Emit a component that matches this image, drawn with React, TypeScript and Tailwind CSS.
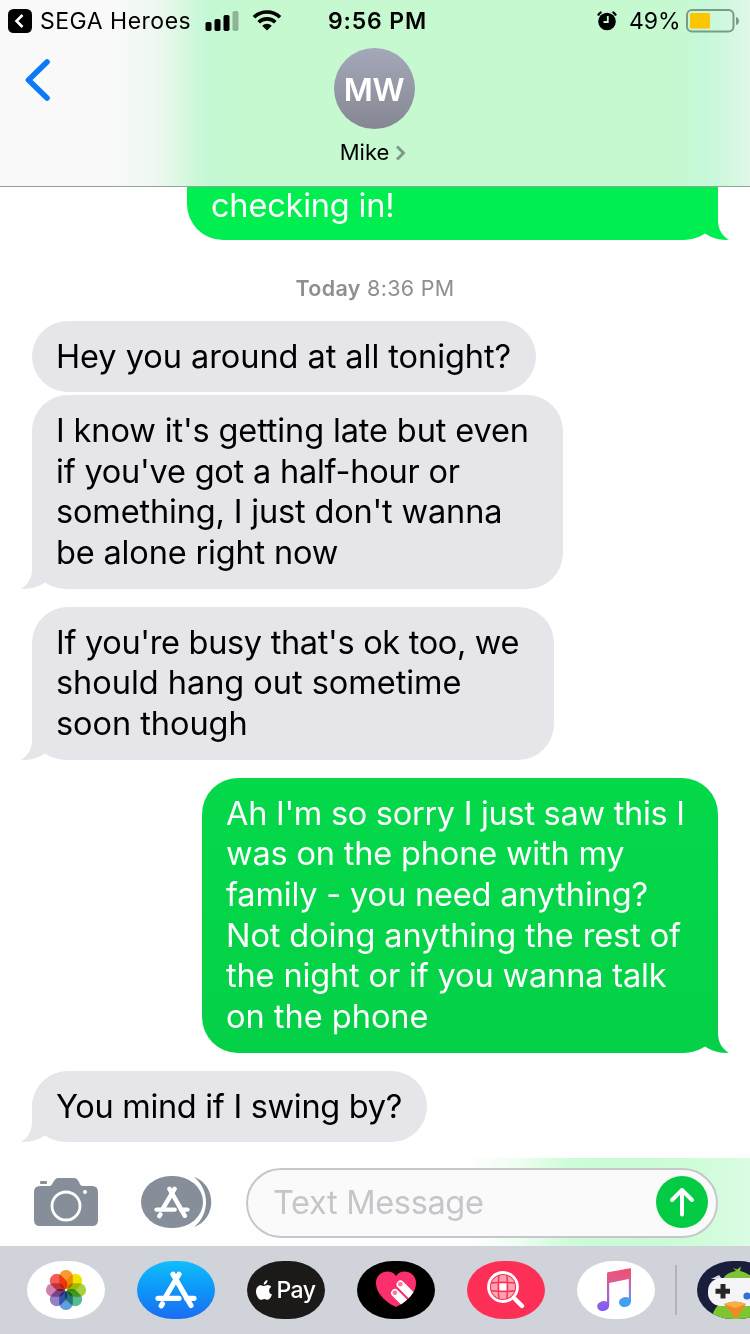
import type { ReactNode } from "react";

type Line = { text: string; tracking?: string };

function Bubble({ side, tone, tailFill = "fill-[#e5e5ea]", width, lines, tail = false, className = "" }: {
  side: "left" | "right";
  tone: string;
  tailFill?: string;
  width: string;
  lines: Line[];
  tail?: boolean;
  className?: string;
}) {
  const left = side === "left";
  return (
    <div className={`relative rounded-[36px] pl-6 pb-[15px] pt-[15.6px] ${width} ${tone} ${left ? "self-start ml-8 text-black" : "self-end mr-8 text-white"} ${className}`}>
      {tail && (
        <svg
          className={`absolute bottom-0 ${left ? "-left-[11px] -scale-x-100" : "-right-[11px]"}`}
          width="51" height="40" viewBox="0 0 51 40"
        >
          <path d="M0 40 C13 40 20 38 27 33.5 C34 38 42 40.5 51 39.8 C44 36 40 29 40 20 V0 H0 Z" className={tailFill} />
        </svg>
      )}
      {lines.map((l) => (
        <div key={l.text} className={`relative whitespace-nowrap text-[32.5px] leading-[40.67px] ${l.tracking ?? ""}`}>{l.text}</div>
      ))}
    </div>
  );
}

function StoreMark({ className }: { className: string }) {
  return (
    <svg className={className} viewBox="0 0 42 38" fill="none" stroke="white" strokeWidth="5.2" strokeLinecap="round">
      <path d="M18 3.2 L36 34.5" />
      <path d="M24 3.2 L10.5 26" />
      <path d="M3 27.3 H24" />
      <path d="M31.5 27.3 H39" />
      <path d="M7.4 32.8 L6.2 34.8" />
    </svg>
  );
}

function Pill({ children, className }: { children: ReactNode; className: string }) {
  return (
    <div className={`flex h-[58px] w-[78px] shrink-0 items-center justify-center overflow-hidden rounded-[36px/29px] ${className}`}>
      {children}
    </div>
  );
}

const petals = [
  ["#f9992e", 0], ["#f3e300", 45], ["#a9d13f", 90], ["#5bbb90", 135],
  ["#5f9fdc", 180], ["#9182c4", 225], ["#cf82b2", 270], ["#f25e55", 315],
] as const;

export default function App() {
  return (
    <div className="flex h-[1334px] w-[750px] flex-col overflow-hidden bg-white font-['Inter','Liberation_Sans',sans-serif]">
      <header className="flex h-[187px] shrink-0 flex-col border-b border-[#8fa598] bg-[linear-gradient(90deg,#f9f9f9_0,#f9f9f9_110px,#eff8f1_155px,#d9f8e1_182px,#c3f8d5_207px,#c6f9cf_250px,#c6f9d0_680px,#c5f8d8_705px,#d6f8e2_735px,#e0f8e8_750px)]">
        <div className="flex h-[41px] shrink-0 items-center text-black">
          <div className="flex w-[328px] items-center pl-2">
            <svg width="24" height="24" viewBox="0 0 24 24">
              <rect width="24" height="24" rx="5.5" fill="#000" />
              <path d="M14.5 6 L8.5 12 L14.5 18" fill="none" stroke="#fff" strokeWidth="2.6" />
            </svg>
            <span className="ml-2 w-[158px] whitespace-nowrap pt-px text-[23px] tracking-[0.5px]">SEGA Heroes</span>
            <svg className="ml-[7px]" width="35" height="20" viewBox="0 0 35 20">
              <rect x="0.5" y="11" width="6" height="9" rx="1.8" />
              <rect x="9.5" y="8" width="6" height="12" rx="1.8" />
              <rect x="18.5" y="4" width="6" height="16" rx="1.8" />
              <rect x="27.5" y="0" width="6" height="20" rx="1.8" fill="#000" opacity=".28" />
            </svg>
            <svg className="ml-3" width="30" height="21" viewBox="0 0 30 21" fill="none" stroke="#000" strokeWidth="3.6">
              <path d="M2 7.2 C9 0.2 21 0.2 28 7.2" />
              <path d="M6.7 12.2 C11 7.8 19 7.8 23.3 12.2" />
              <path d="M10.2 15.8 C13 13 17 13 19.8 15.8 L15 20.6 Z" fill="#000" stroke="none" />
            </svg>
          </div>
          <span className="whitespace-nowrap pt-px text-[23px] font-semibold tracking-[0.85px]">9:56 PM</span>
          <div className="ml-auto flex items-center pr-[10px]">
            <svg width="20" height="20" viewBox="0 0 20 20">
              <circle cx="10" cy="10.5" r="8.8" />
              <path d="M1 4.5 A7 7 0 0 1 4.5 1 M19 4.5 A7 7 0 0 0 15.5 1" fill="none" stroke="#000" strokeWidth="2.2" />
              <path d="M10.8 5 V11 H6.5" fill="none" stroke="#c6f9cf" strokeWidth="1.8" />
            </svg>
            <span className="ml-3 w-[53px] whitespace-nowrap pt-px text-[23px]">49%</span>
            <svg className="ml-1" width="54" height="24" viewBox="0 0 54 24">
              <rect x="1" y="1" width="46.5" height="21.5" rx="5" fill="none" stroke="#7f9987" strokeWidth="2" />
              <rect x="4" y="4" width="20" height="15.5" rx="1.5" fill="#fdc400" />
              <path d="M50 8 C54 9 54 15 50 16 Z" fill="#7f9987" />
            </svg>
          </div>
        </div>
        <div className="grid grid-cols-[1fr_160px_1fr] pr-[2px]">
          <svg className="ml-6 mt-4" width="28" height="46" viewBox="0 0 28 46">
            <path d="M23 5 L4.5 23 L23 41" fill="none" stroke="#0a7bf5" strokeWidth="5.6" strokeLinecap="round" strokeLinejoin="round" />
          </svg>
          <div className="flex flex-col items-center pt-[7px]">
            <div className="flex size-[81px] items-center justify-center rounded-full bg-linear-to-b from-[#a5a8b9] to-[#858793] pt-[2px] text-[31.5px] font-semibold tracking-[-0.3px] text-white">MW</div>
            <div className="mt-[7px] flex items-center gap-[6px] pr-[2px] text-[22px] leading-8 text-black">
              <span>Mike</span>
              <svg className="mt-[2px]" width="11" height="16" viewBox="0 0 11 16"><path d="M2 1.5 L8.5 8 L2 14.5" fill="none" stroke="#7f9a89" strokeWidth="3" /></svg>
            </div>
          </div>
        </div>
      </header>

      <main className="flex h-[971px] shrink-0 flex-col">
        <Bubble side="right" tone="bg-[#00ee4f]" tailFill="fill-[#00ee4f]" width="w-[531px]" tail className="rounded-t-none pt-0!" lines={[{ text: "checking in!", tracking: "tracking-[-0.2px] leading-[38px]!" }]} />
        <div className="mt-[30px] h-9 text-center text-[21.5px] leading-9 tracking-[0.3px] text-[#8e8e93]"><b className="font-semibold">Today</b> 8:36 PM</div>
        <Bubble side="left" tone="bg-[#e5e5ea]" width="w-[504px]" className="mt-[15px]" lines={[{ text: "Hey you around at all tonight?", tracking: "tracking-[-0.05px]" }]} />
        <Bubble side="left" tone="bg-[#e5e5ea]" width="w-[531px]" tail className="mt-[3px]" lines={[
          { text: "I know it's getting late but even", tracking: "tracking-[-0.13px]" },
          { text: "if you've got a half-hour or", tracking: "tracking-[-0.22px]" },
          { text: "something, I just don't wanna", tracking: "tracking-[-0.16px]" },
          { text: "be alone right now", tracking: "tracking-[-0.16px]" },
        ]} />
        <Bubble side="left" tone="bg-[#e5e5ea]" width="w-[522px]" tail className="mt-[18.6px]" lines={[
          { text: "If you're busy that's ok too, we", tracking: "tracking-[-0.32px]" },
          { text: "should hang out sometime", tracking: "tracking-[-0.03px]" },
          { text: "soon though", tracking: "tracking-[-0.05px]" },
        ]} />
        <Bubble side="right" tone="bg-linear-to-b from-[#04d94a] to-[#04d147] to-85%" tailFill="fill-[#04d147]" width="w-[516px]" tail className="mt-[18.4px]" lines={[
          { text: "Ah I'm so sorry I just saw this I", tracking: "tracking-[-0.28px]" },
          { text: "was on the phone with my", tracking: "tracking-[-0.17px]" },
          { text: "family - you need anything?", tracking: "tracking-[-0.17px]" },
          { text: "Not doing anything the rest of", tracking: "tracking-[-0.1px]" },
          { text: "the night or if you wanna talk", tracking: "tracking-[-0.14px]" },
          { text: "on the phone" },
        ]} />
        <Bubble side="left" tone="bg-[#e5e5ea]" width="w-[395px]" tail className="mt-[18.4px]" lines={[{ text: "You mind if I swing by?", tracking: "tracking-[-0.3px]" }]} />
      </main>

      <section className="flex h-[88px] shrink-0 items-center bg-[linear-gradient(90deg,#fefefe_0,#fefefe_470px,#eefdf1_520px,#cdfcd8_570px,#cafbd4_640px,#cffcd9_700px,#dbfce4_750px)] pl-[34px] pt-[2px]">
        <svg width="64" height="50" viewBox="0 0 64 50">
          <rect x="6" y="3" width="7" height="3" rx="1" fill="#868e99" />
          <path d="M6 8 H14 C18 8 18 6 20 3 C21.5 .5 23 0 25 0 H39 C41 0 43 .5 44.5 3 C46 6 46 8 50 8 H58 Q64 8 64 14 V42 Q64 48 58 48 H6 Q0 48 0 42 V14 Q0 8 6 8 Z" fill="#868e99" />
          <circle cx="32" cy="28" r="14" fill="none" stroke="#fff" strokeWidth="2.8" />
          <circle cx="51" cy="14" r="2" fill="#fff" />
        </svg>
        <div className="-mt-[2px] ml-[43px] flex">
          <div className="z-10 flex h-[52px] w-[62px] items-center justify-center rounded-[30px/26px] bg-[#868e99]"><StoreMark className="h-[33px] w-9" /></div>
          <svg className="-ml-[11px]" width="20" height="52" viewBox="0 0 20 52"><path d="M2 1 C25 9 25 43 2 51 C18 38 18 14 2 1 Z" fill="#868e99" /></svg>
        </div>
        <div className="ml-[34px] flex h-[70px] w-[472px] items-center justify-between rounded-full border-2 border-[#c7c7cb] bg-[#fafafa] pl-[25px] pr-2 text-[32.5px] text-[#c5c5ca]">
          <span className="pt-px tracking-[-0.33px]">Text Message</span>
          <div className="-mt-[2px] flex size-[52px] items-center justify-center rounded-full bg-[#04cb44]">
            <svg width="26" height="30" viewBox="0 0 26 30" fill="none" stroke="#fff" strokeWidth="4" strokeLinecap="round" strokeLinejoin="round"><path d="M13 27.5 V3 M3 13 L13 3 L23 13" /></svg>
          </div>
        </div>
      </section>

      <footer className="flex h-[88px] shrink-0 items-center gap-8 bg-[#d1d3da] pl-[27px]">
        <Pill className="bg-white">
          <svg width="42" height="42" viewBox="0 0 42 42">
            {petals.map(([c, a]) => (
              <rect key={a} x="14.2" y="1" width="13.6" height="19" rx="6.6" fill={c} transform={`rotate(${a} 21 21)`} className="mix-blend-multiply" />
            ))}
          </svg>
        </Pill>
        <Pill className="bg-linear-to-b from-[#12bdfb] to-[#1c6bf3]"><StoreMark className="h-[38px] w-[42px]" /></Pill>
        <Pill className="bg-[#1b1a19] text-white">
          <svg width="16" height="20" viewBox="0 0 16 20" fill="#fff">
            <path d="M11.5 0 C11.7 2.5 9.8 4.7 7.8 4.7 C7.5 2.5 9.4 .3 11.5 0 Z M8 6 C9.2 6 10 5 11.8 5 C13.2 5 14.5 5.7 15.3 6.9 C12 8.8 12.6 13.3 16 14.4 C15 17 13.4 19.7 11.6 19.7 C10.3 19.7 9.8 18.9 8.3 18.9 C6.7 18.9 6.2 19.7 4.9 19.7 C2.7 19.7 0 15.5 0 11.5 C0 7.5 2.4 5.2 4.7 5.2 C6.2 5.2 7.2 6 8 6 Z" />
          </svg>
          <span className="ml-1 text-[23px] font-medium leading-none tracking-[-0.5px]">Pay</span>
        </Pill>
        <Pill className="bg-black">
          <svg width="42" height="38" viewBox="0 0 42 38">
            <defs><clipPath id="heart"><path d="M21 36 C14 33 1 24 1 12 C1 0 16 -3 21 5 C26 -3 41 0 41 12 C41 24 28 33 21 36 Z" /></clipPath></defs>
            <path d="M21 36 C14 33 1 24 1 12 C1 0 16 -3 21 5 C26 -3 41 0 41 12 C41 24 28 33 21 36 Z" fill="#fc2f6d" />
            <g clipPath="url(#heart)" stroke="#fff" strokeWidth="7.8" strokeLinecap="round">
              <path d="M25.5 13.5 L41 29 M20 22 L34 36" />
              <g stroke="#f9799d" strokeWidth="4.6"><path d="M25.3 13.3 h.1 M19.8 21.8 h.1" /></g>
            </g>
          </svg>
        </Pill>
        <Pill className="bg-[#fd2f56]">
          <svg width="38" height="38" viewBox="0 0 38 38" fill="none" stroke="#fff">
            <circle cx="16" cy="16" r="12" fill="#fda4b3" stroke="none" />
            <path d="M12.5 12.5 h7 v7 h-7 z" fill="#fff" stroke="none" />
            <path d="M4 12 Q16 10.5 28 12 M4 19.8 Q16 21.3 28 19.8 M12 4 Q10.5 16 12 28 M19.8 4 Q21.3 16 19.8 28" stroke="#fd2f56" strokeWidth="1.5" />
            <circle cx="16" cy="16" r="14.5" strokeWidth="2.8" />
            <path d="M27 27 L35 35" strokeWidth="4.4" strokeLinecap="round" />
          </svg>
        </Pill>
        <Pill className="bg-white">
          <svg className="-ml-1" width="36" height="44" viewBox="0 0 36 44">
            <defs>
              <linearGradient id="note" gradientUnits="userSpaceOnUse" x1="0" y1="0" x2="0" y2="44"><stop offset="0" stopColor="#f0506e" /><stop offset=".25" stopColor="#e2588c" /><stop offset=".6" stopColor="#a565d8" /><stop offset="1" stopColor="#7a5cf5" /></linearGradient>
              <linearGradient id="noteRight" gradientUnits="userSpaceOnUse" x1="0" y1="8" x2="0" y2="38"><stop offset="0" stopColor="#ee5577" /><stop offset=".5" stopColor="#9a7ce0" /><stop offset=".85" stopColor="#3fa2f0" /></linearGradient>
            </defs>
            <path d="M11 5.5 Q11 4.5 12 4.3 L34 .3 Q35 .2 35 1.2 V10.5 L13.2 15 V37 H11 Z" fill="url(#note)" />
            <ellipse cx="7.2" cy="38" rx="6" ry="5" transform="rotate(-14 7.2 38)" fill="url(#note)" />
            <rect x="32.8" y="8" width="2.2" height="26" fill="url(#noteRight)" />
            <ellipse cx="29" cy="34" rx="6" ry="5" transform="rotate(-14 29 34)" fill="url(#noteRight)" />
          </svg>
        </Pill>
        <div className="-ml-3 -mr-3 h-[50px] w-[2px] shrink-0 bg-[#b1b3bb]" />
        <Pill className="bg-[#191e3c]">
          <svg className="shrink-0" width="78" height="58" viewBox="0 0 78 58">
            <path d="M14 58 C16 50 20 44 26 40 H70 V58 Z" fill="#7cc62f" />
            <path d="M26 18 C29 13 33 11 39 10 L36 7 L40 8.5 L44 5.5 L43 10 C50 12 54 14 60 20 Z" fill="#7cc435" />
            <path d="M14 18 L22 14 L25 18 Z" fill="#d9dae0" />
            <rect x="11" y="17" width="64" height="28" rx="13" fill="#f5f5f7" />
            <path d="M26 23 V37.5 M18.5 30.2 H33" stroke="#26262a" strokeWidth="5" />
            <circle cx="50" cy="35" r="3.6" fill="#2f6fd6" />
            <path d="M27 43 Q38 38 49 43 L39 58 Z" fill="#f08a24" />
            <path d="M27 43 Q38 38 49 43 L38 47 Z" fill="#f6b04a" />
          </svg>
        </Pill>
      </footer>
    </div>
  );
}
